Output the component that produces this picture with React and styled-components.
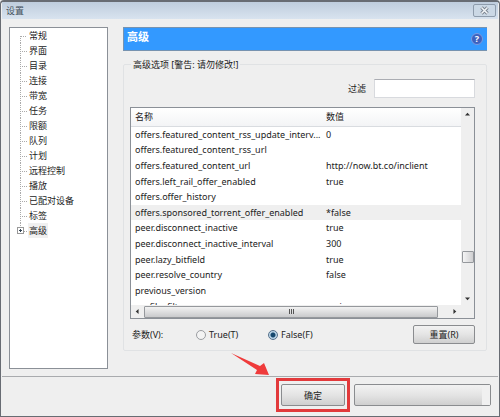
import React, { useState } from 'react'
import styled, { createGlobalStyle } from 'styled-components'

const categories = ['常规', '界面', '目录', '连接', '带宽', '任务', '限额', '队列', '计划', '远程控制', '播放', '已配对设备', '标签', '高级']

const options = [
  ['offers.featured_content_rss_update_interv...', '0'],
  ['offers.featured_content_rss_url', ''],
  ['offers.featured_content_url', 'http://now.bt.co/inclient'],
  ['offers.left_rail_offer_enabled', 'true'],
  ['offers.offer_history', ''],
  ['offers.sponsored_torrent_offer_enabled', '*false'],
  ['peer.disconnect_inactive', 'true'],
  ['peer.disconnect_inactive_interval', '300'],
  ['peer.lazy_bitfield', 'true'],
  ['peer.resolve_country', 'false'],
  ['previous_version', ''],
  ['profiler.filter', 'main'],
]

const App = () => {
  const [category, setCategory] = useState('高级')
  const [selected, setSelected] = useState('offers.sponsored_torrent_offer_enabled')
  const [value, setValue] = useState('false')
  const [filter, setFilter] = useState('')

  return (
    <Window>
      <GlobalStyle />
      <TitleBar>
        <Title>设置</Title>
        <CloseButton type="button" aria-label="关闭">
          <svg width="11" height="9" viewBox="0 0 11 9">
            <path d="M2.5 1.5l6 6M8.5 1.5l-6 6" stroke="#7b8591" strokeWidth="3.4" />
            <path d="M2.5 1.5l6 6M8.5 1.5l-6 6" stroke="#f2f5f8" strokeWidth="1.5" />
          </svg>
        </CloseButton>
      </TitleBar>

      <Content>
        <Tree>
          {categories.map(name => (
            <TreeItem key={name}>
              {name === '高级' && <Expander type="button" aria-label="展开" />}
              <TreeButton type="button" $active={name === category} onClick={() => setCategory(name)}>
                {name}
              </TreeButton>
            </TreeItem>
          ))}
        </Tree>

        <Page>
          <PageHeader>
            <h1>高级</h1>
            <HelpButton type="button" aria-label="帮助">?</HelpButton>
          </PageHeader>

          <Group>
            <legend>高级选项 [警告: 请勿修改!]</legend>
            <FilterRow>
              <label htmlFor="filter">过滤</label>
              <FilterInput id="filter" value={filter} onChange={e => setFilter(e.target.value)} />
            </FilterRow>

            <ListBox>
              <ListView>
                <OptionTable>
                  <thead>
                    <tr>
                      <th>名称</th>
                      <th>数值</th>
                    </tr>
                  </thead>
                  <tbody>
                    {options.filter(([name]) => name.includes(filter)).map(([name, val]) => (
                      <OptionRow key={name} $selected={name === selected} onClick={() => setSelected(name)}>
                        <td>{name}</td>
                        <td>{val}</td>
                      </OptionRow>
                    ))}
                  </tbody>
                </OptionTable>
              </ListView>
              <VerticalBar>
                <Arrow viewBox="0 0 7 7"><path d="M0 5l3.5-4L7 5z" /></Arrow>
                <VerticalThumb />
                <Arrow viewBox="0 0 7 7"><path d="M0 2h7L3.5 6z" /></Arrow>
              </VerticalBar>
              <HorizontalBar>
                <Arrow viewBox="0 0 7 7"><path d="M5 0v7L1 3.5z" /></Arrow>
                <HorizontalThumb><i /><i /><i /></HorizontalThumb>
                <Arrow viewBox="0 0 7 7"><path d="M2 0v7l4-3.5z" /></Arrow>
              </HorizontalBar>
            </ListBox>

            <ParamRow>
              <ParamLabel>参数(V):</ParamLabel>
              <RadioLabel>
                <Radio name="param" checked={value === 'true'} onChange={() => setValue('true')} />
                True(T)
              </RadioLabel>
              <RadioLabel>
                <Radio name="param" checked={value === 'false'} onChange={() => setValue('false')} />
                False(F)
              </RadioLabel>
              <ResetButton type="button">重置(R)</ResetButton>
            </ParamRow>
          </Group>
        </Page>
      </Content>

      <Footer>
        <Highlight>
          <Pointer viewBox="0 0 38 24">
            <path d="M0 0L29 13l4-3 5 12-14-1 2-4z" fill="#ef3b3b" />
          </Pointer>
          <OkButton type="button">确定</OkButton>
        </Highlight>
        <BlankButton type="button" aria-label="取消"><span /></BlankButton>
      </Footer>
    </Window>
  )
}

const GlobalStyle = createGlobalStyle`
  * {
    box-sizing: border-box;
  }

  body {
    margin: 0;
    background: #efefef;
    color: #222;
    font: 9px/15px "Noto Sans", "Noto Sans CJK SC", sans-serif;
  }

  button, input {
    font: inherit;
    color: inherit;
    padding: 0;
    margin: 0;
  }
`

const Window = styled.div`
  display: flex;
  flex-direction: column;
  min-height: 100vh;
  padding: 0 1px 1px;
  background: #efefef;
  border: 1px solid #686c73;
  border-top-width: 2px;
  border-radius: 4px 4px 0 0;
`

const TitleBar = styled.header`
  display: flex;
  align-items: center;
  justify-content: space-between;
  height: 17px;
  padding: 0 2px 0 4px;
  background: linear-gradient(#bfcddd, #d8e3ef);
`

const Title = styled.span`
  color: #44505c;
`

const CloseButton = styled.button`
  display: flex;
  align-items: center;
  justify-content: center;
  width: 23px;
  height: 13px;
  border: 1px solid #8e9cac;
  border-radius: 2px;
  background: #cbd8e5;
`

const Content = styled.main`
  display: flex;
  flex: 1;
  gap: 15px;
  padding: 8px 11px 7px 7px;
`

const Tree = styled.ul`
  flex: 0 0 99px;
  margin: 0;
  padding: 0 0 0 10px;
  list-style: none;
  background: #fff;
  border: 1px solid #8b9097;
`

const TreeItem = styled.li`
  position: relative;
  height: 15px;
  padding-left: 8px;

  &::before {
    content: '';
    position: absolute;
    left: 0;
    top: 0;
    width: 6px;
    height: 8px;
    border-left: 1px dotted #aaa;
    border-bottom: 1px dotted #aaa;
  }

  &:not(:last-child)::after {
    content: '';
    position: absolute;
    left: 0;
    top: 8px;
    height: 7px;
    border-left: 1px dotted #aaa;
  }

  &:first-child::before {
    border-left: 0;
  }
`

const Expander = styled.button`
  position: absolute;
  z-index: 1;
  left: -3px;
  top: 4px;
  width: 7px;
  height: 7px;
  border: 1px solid #999;
  background:
    linear-gradient(#345, #345) center / 3px 1px no-repeat,
    linear-gradient(#345, #345) center / 1px 3px no-repeat,
    #fff;
`

const TreeButton = styled.button`
  display: block;
  height: 15px;
  padding: 0 1px;
  border: 0;
  background: ${props => (props.$active ? '#f0f0f0' : 'transparent')};
`

const Page = styled.section`
  display: flex;
  flex: 1;
  flex-direction: column;
  min-width: 0;
`

const PageHeader = styled.div`
  display: flex;
  align-items: center;
  justify-content: space-between;
  height: 24px;
  padding: 0 4px 0 3px;
  background: #3399ff;
  border: 1px solid #7793b0;
  border-right: 0;

  h1 {
    margin: 0;
    padding-bottom: 5px;
    color: #fff;
    font-size: 11px;
    font-weight: 700;
  }
`

const HelpButton = styled.button`
  width: 12px;
  height: 12px;
  border: 1px solid #7b9be0;
  border-radius: 50%;
  background: #3c62c0;
  color: #fff;
  font-weight: 700;
  line-height: 10px;
`

const Group = styled.fieldset`
  display: flex;
  flex-direction: column;
  min-width: 0;
  margin: 6px 0 0;
  padding: 7px 11px 6px 6px;
  border: 1px solid #e0e2e4;
  border-radius: 2px;

  legend {
    margin-left: 1px;
    padding: 0 2px;
  }
`

const FilterRow = styled.div`
  display: flex;
  align-items: center;
  justify-content: flex-end;
  gap: 8px;
`

const FilterInput = styled.input`
  width: 101px;
  height: 19px;
  padding: 0 4px;
  border: 1px solid #d8dade;
  border-top-color: #abadb3;
  background: #fff;
`

const ListBox = styled.div`
  display: grid;
  grid-template-columns: 1fr 13px;
  grid-template-rows: 197px 13px;
  margin-top: 9px;
  border: 1px solid #8b9097;
  background: #efefef;
`

const ListView = styled.div`
  overflow: hidden;
  background: #fff;
`

const OptionTable = styled.table`
  width: 100%;
  height: 206px;
  table-layout: fixed;
  border-collapse: collapse;
  line-height: 15px;

  th, td {
    padding: 0 0 0 4px;
    overflow: hidden;
    text-align: left;
    text-overflow: ellipsis;
    white-space: nowrap;
  }

  th {
    height: 18px;
    font-weight: 400;
    background: linear-gradient(#fff, #f3f4f6);
    border-bottom: 1px solid #d9dce0;
  }

  th:first-child {
    width: 191px;
  }
`

const OptionRow = styled.tr`
  background: ${props => (props.$selected ? '#efefef' : '#fff')};
`

const VerticalBar = styled.div`
  display: flex;
  flex-direction: column;
  align-items: center;
  justify-content: space-between;
  padding: 4px 0;
`

const VerticalThumb = styled.div`
  width: 12px;
  height: 12px;
  margin-top: 100px;
  border: 1px solid #95989c;
  border-radius: 1px;
  background: linear-gradient(90deg, #f5f5f5, #cfcfd1);
`

const HorizontalBar = styled.div`
  display: flex;
  grid-column: 1 / -1;
  align-items: center;
  gap: 4px;
  padding: 0 17px 0 4px;
`

const HorizontalThumb = styled.div`
  display: flex;
  flex: 1;
  align-items: center;
  justify-content: center;
  gap: 1px;
  height: 12px;
  margin-right: 10px;
  border: 1px solid #95989c;
  border-radius: 1px;
  background: linear-gradient(#f2f2f2, #c9cacc);

  i {
    width: 1px;
    height: 5px;
    background: #555;
  }
`

const Arrow = styled.svg`
  flex: none;
  width: 5px;
  height: 5px;
  fill: #333;
`

const ParamRow = styled.div`
  display: flex;
  align-items: center;
  margin-top: 6px;
  padding-left: 2px;
`

const ParamLabel = styled.span`
  width: 64px;
`

const RadioLabel = styled.label`
  display: flex;
  align-items: center;
  gap: 3px;
  width: 72px;
`

const Radio = styled.input.attrs({ type: 'radio' })`
  appearance: none;
  width: 10px;
  height: 10px;
  border: 1px solid #9a9da1;
  border-radius: 50%;
  background: #f3f3f3;

  &:checked {
    border-color: #56718c;
    background: radial-gradient(circle, #16486e 0 2px, #b9d3e6 3px);
  }
`

const Button = styled.button`
  border: 1px solid #8a8c8f;
  border-radius: 2px;
  background: linear-gradient(#f2f2f2, #e4e4e4 50%, #cfcfcf);
`

const ResetButton = styled(Button)`
  width: 62px;
  height: 19px;
  margin-left: auto;
`

const Footer = styled.footer`
  display: flex;
  align-items: center;
  justify-content: flex-end;
  gap: 4px;
  padding: 1px 7px 3px;
  border-top: 1px solid #a9abae;
`

const Highlight = styled.div`
  position: relative;
  padding: 3px 2px;
  border: 3px solid #e2393b;
`

const Pointer = styled.svg`
  position: absolute;
  right: 78px;
  bottom: 32px;
  width: 38px;
  height: 24px;
`

const OkButton = styled(Button)`
  display: block;
  width: 64px;
  height: 22px;
`

const BlankButton = styled(Button)`
  display: flex;
  justify-content: flex-end;
  width: 137px;
  height: 22px;

  span {
    width: 8px;
    height: 20px;
    background: #f0f0f0;
  }
`

export default App
